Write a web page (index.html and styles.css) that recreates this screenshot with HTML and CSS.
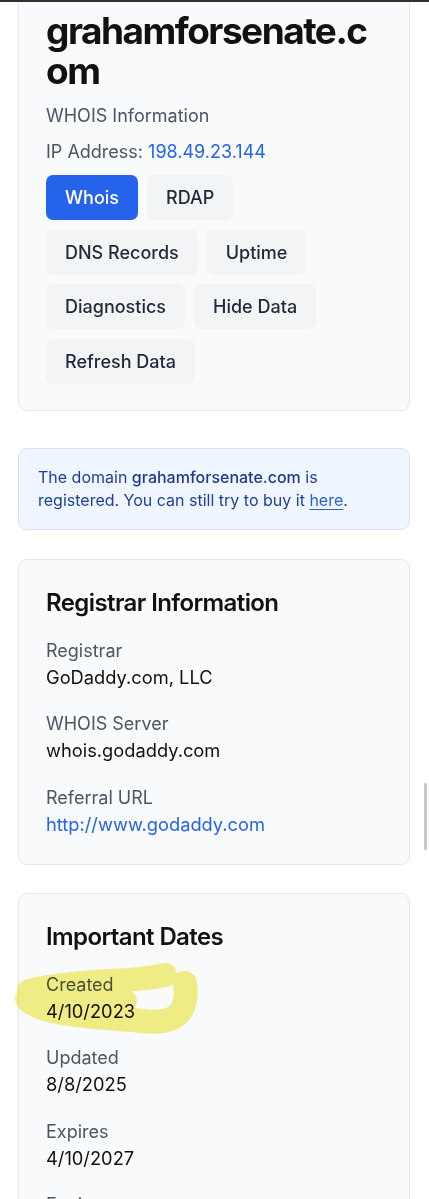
FILE: index.html
```html
<!DOCTYPE html>
<html lang="en">
<head>
<meta charset="utf-8">
<title>grahamforsenate.com WHOIS</title>
<link rel="stylesheet" href="styles.css">
</head>
<body>
<div class="topline"></div>
<main class="page">
  <section class="card card-head">
    <h1 class="domain">grahamforsenate.com</h1>
    <p class="subtitle">WHOIS Information</p>
    <p class="ip">IP Address: <a class="link" href="#">198.49.23.144</a></p>
    <div class="tabs">
      <button class="btn btn-active">Whois</button>
      <button class="btn">RDAP</button>
      <button class="btn">DNS Records</button>
      <button class="btn">Uptime</button>
      <button class="btn">Diagnostics</button>
      <button class="btn">Hide Data</button>
      <button class="btn">Refresh Data</button>
    </div>
  </section>

  <div class="alert">
    <p class="alert-text">The domain <span class="strong">grahamforsenate.com</span> is registered. You can still try to buy it <a class="alert-link" href="#">here</a>.</p>
  </div>

  <section class="card info">
    <h2 class="card-title">Registrar Information</h2>
    <dl class="fields">
      <div class="field"><dt>Registrar</dt><dd>GoDaddy.com, LLC</dd></div>
      <div class="field"><dt>WHOIS Server</dt><dd>whois.godaddy.com</dd></div>
      <div class="field"><dt>Referral URL</dt><dd><a class="link" href="#">http://www.godaddy.com</a></dd></div>
    </dl>
  </section>

  <section class="card info dates">
    <h2 class="card-title">Important Dates</h2>
    <dl class="fields">
      <div class="field"><dt>Created</dt><dd>4/10/2023</dd></div>
      <div class="field"><dt>Updated</dt><dd>8/8/2025</dd></div>
      <div class="field"><dt>Expires</dt><dd>4/10/2027</dd></div>
      <div class="field"><dt>Expiry</dt><dd>4/10/2027</dd></div>
    </dl>
    <svg class="scribble" width="200" height="80" viewBox="0 0 200 80" aria-hidden="true">
      <g class="scribble-ink">
        <path d="M14 30 C 60 18, 120 22, 150 14" />
        <path d="M12 38 C 24 54, 80 56, 128 60 C 160 64, 174 52, 170 22" />
        <path d="M18 34 L 110 40" />
      </g>
    </svg>
  </section>
</main>
<div class="scroll-thumb"></div>
</body>
</html>
```

FILE: styles.css
```css
* { box-sizing: border-box; }

html, body {
  margin: 0;
  padding: 0;
  background: #ffffff;
}

body {
  font-family: Inter, "Noto Sans", "Liberation Sans", sans-serif;
  color: #111827;
  overflow: hidden;
}

.topline {
  position: fixed;
  top: 0;
  left: 0;
  right: 0;
  height: 2px;
  background: #2f3033;
  z-index: 5;
}

.page {
  padding: 0 19px 0 18px;
}

.card {
  background: #f9fafb;
  border: 1px solid #e5e7eb;
  border-radius: 9px;
  padding: 27px 27px 26px;
}

.card-head {
  margin-top: -17px;
}

.domain {
  margin: 0;
  font-size: 37px;
  line-height: 40px;
  font-weight: 700;
  letter-spacing: -1.5px;
  word-break: break-all;
  color: #111111;
}

.subtitle {
  margin: 11px 0 0;
  font-size: 18px;
  line-height: 28px;
  color: #4b5563;
}

.ip {
  margin: 8px 0 0;
  font-size: 18px;
  line-height: 28px;
  color: #4b5563;
}

.link {
  color: #2563eb;
  text-decoration: none;
}

.tabs {
  margin-top: 9px;
  display: flex;
  flex-wrap: wrap;
  gap: 9.5px 9px;
}

.btn {
  font-family: inherit;
  font-size: 18px;
  font-weight: 500;
  line-height: 27px;
  height: 45px;
  padding: 9px 19px;
  border: 0;
  border-radius: 7px;
  background: #f3f4f6;
  color: #1f2937;
}

.btn-active {
  background: #2563eb;
  color: #ffffff;
}

.alert {
  margin-top: 37px;
  background: #eff6ff;
  border: 1px solid #d3e3fb;
  border-radius: 9px;
  padding: 17px 19px 17px;
}

.alert-text {
  margin: 0;
  font-size: 16px;
  line-height: 23px;
  color: #1e3f99;
}

.strong {
  font-weight: 500;
  color: #1e3a8a;
}

.alert-link {
  color: #2d63c8;
  text-decoration: underline;
  text-underline-offset: 3px;
}

.info {
  margin-top: 29px;
}

.dates {
  margin-top: 28px;
  position: relative;
}

.card-title {
  margin: 0;
  font-size: 24px;
  line-height: 32px;
  font-weight: 600;
  letter-spacing: -0.6px;
  color: #111111;
}

.fields {
  margin: 18px 0 0;
  display: flex;
  flex-direction: column;
  gap: 19.5px;
}

.field dt {
  font-size: 18px;
  line-height: 27px;
  color: #4b5563;
}

.field dd {
  margin: 0;
  font-size: 18.3px;
  line-height: 27px;
  color: #111111;
}

.scribble {
  position: absolute;
  left: -4px;
  top: 67px;
  pointer-events: none;
  mix-blend-mode: multiply;
}

.scribble-ink {
  fill: none;
  stroke: #f4ef72;
  stroke-width: 24;
  stroke-linecap: round;
  stroke-linejoin: round;
  opacity: 0.85;
}

.scroll-thumb {
  position: fixed;
  right: 2px;
  top: 783px;
  width: 3px;
  height: 67px;
  border-radius: 2px;
  background: #c6c6c6;
}
```
